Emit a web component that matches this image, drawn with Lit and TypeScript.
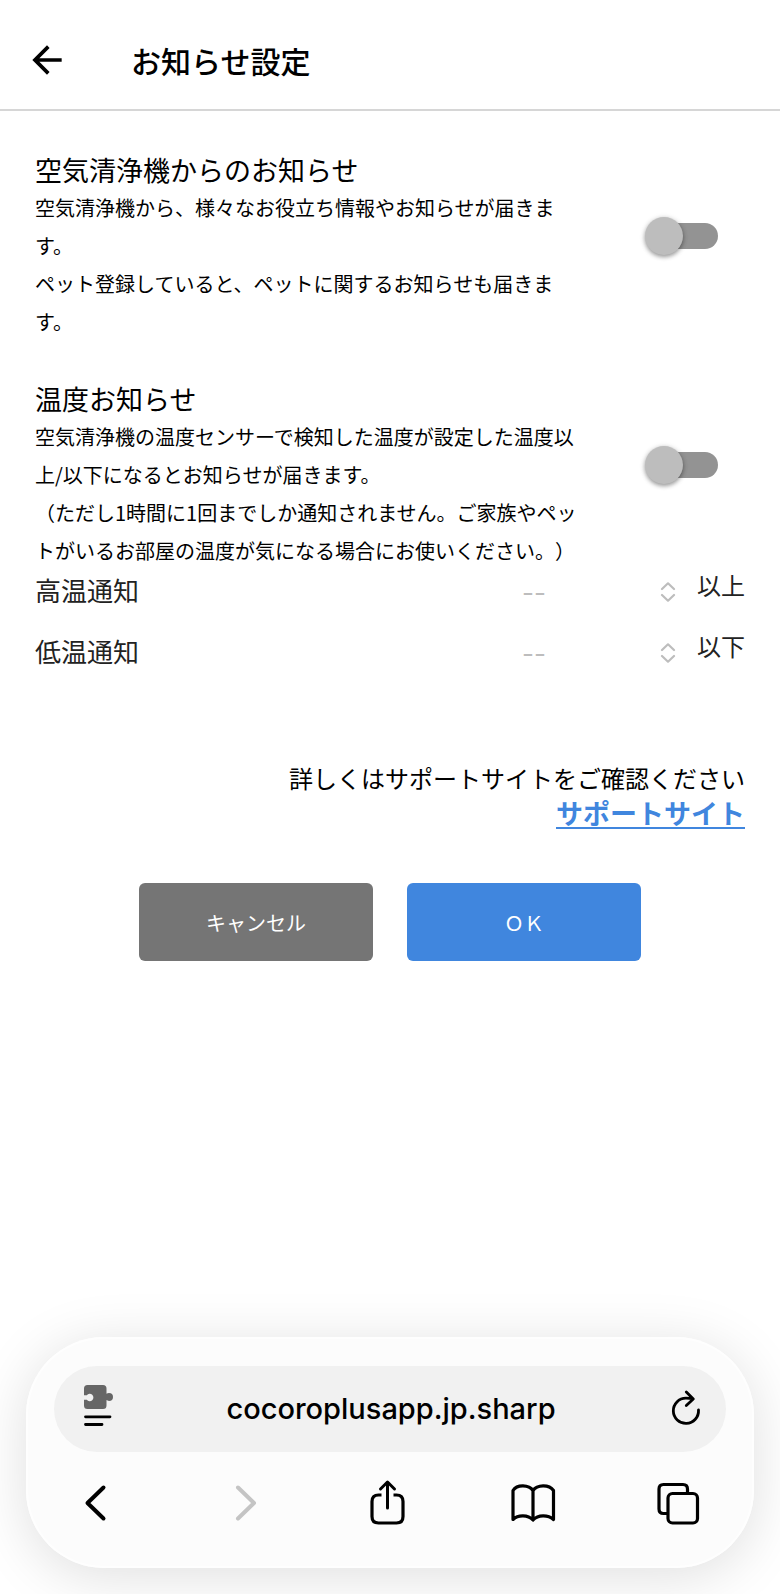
import { LitElement, html, css, svg } from "lit";
import { customElement, property } from "lit/decorators.js";

@customElement("toggle-switch")
class ToggleSwitch extends LitElement {
  @property() label = "";

  static styles = css`
    :host {
      display: block;
    }
    .switch {
      appearance: none;
      display: flex;
      align-items: center;
      width: 73px;
      height: 38px;
      margin: 0;
      cursor: pointer;
      position: relative;
    }
    .switch::before {
      content: "";
      position: absolute;
      inset: 6px 0 6px 8px;
      border-radius: 13px;
      background: #939393;
    }
    .switch::after {
      content: "";
      position: relative;
      width: 38px;
      height: 38px;
      border-radius: 50%;
      background: #bdbdbd;
      box-shadow: 0 2px 4px rgba(0, 0, 0, 0.35), 0 1px 6px rgba(0, 0, 0, 0.12);
    }
    .switch:checked::before {
      background: #9fc1ee;
    }
    .switch:checked::after {
      margin-left: auto;
      background: #4086de;
    }
  `;

  render() {
    return html`<input class="switch" type="checkbox" role="switch" aria-label=${this.label} />`;
  }
}

@customElement("temperature-row")
class TemperatureRow extends LitElement {
  @property() label = "";
  @property() unit = "";

  static styles = css`
    :host {
      display: block;
    }
    .row {
      display: flex;
      align-items: flex-start;
      color: #222;
    }
    .label {
      flex: 1;
      font-size: 26px;
      line-height: 40px;
    }
    .field {
      display: grid;
      width: 158px;
      margin-right: 17px;
      color: #bdbdbd;
    }
    .select,
    .arrows {
      grid-area: 1 / 1;
    }
    .select {
      appearance: none;
      width: 100%;
      height: 44px;
      margin: 0;
      padding: 0;
      border: 0;
      background: none;
      color: inherit;
      opacity: 1;
      font: 26px Inter, sans-serif;
    }
    .arrows {
      justify-self: end;
      align-self: center;
      width: 16px;
      height: 20px;
      margin-right: 4px;
      pointer-events: none;
    }
    .unit {
      font-size: 24px;
      line-height: 30px;
    }
  `;

  render() {
    return html`
      <div class="row">
        <label class="label" for="value">${this.label}</label>
        <div class="field">
          <select class="select" id="value" disabled>
            <option>--</option>
          </select>
          <svg class="arrows" viewBox="0 0 16 20" fill="none" stroke="currentColor" stroke-width="2.2" stroke-linecap="round" stroke-linejoin="round" aria-hidden="true">
            <path d="M2 7 8 1.3 14 7M2 13 8 18.7 14 13" />
          </svg>
        </div>
        <span class="unit">${this.unit}</span>
      </div>
    `;
  }
}

const icons = {
  back: svg`<path d="M29.500 6.500 13.500 22 29.500 37.500" stroke-width="4" />`,
  forward: svg`<path d="M18 6.500 34 22 18 37.500" stroke-width="4" />`,
  share: svg`<path d="M16.500 14h-3q-6.500 0-6.500 6.500v15q0 6.500 6.500 6.500h18q6.500 0 6.500-6.500v-15q0-6.500-6.500-6.500h-3" stroke-width="3.200" stroke-linecap="butt" /><path d="M22.500 27V1.500M15.500 8l7-7 7 7" stroke-width="3" />`,
  book: svg`<path d="M22 9.500C18 3.500 6 3 2 9.500V38.500C7 33.500 17 33.500 22 39 27 33.500 37 33.500 42.500 38.500V9.500C38 3 26 3.500 22 9.500V38.500" stroke-width="3.200" />`,
  tabs: svg`<rect x="12" y="12.500" width="29.500" height="29.500" rx="4.500" stroke-width="3.200" /><path d="M11 32.500H7.500Q3 32.500 3 28V8Q3 3.500 7.500 3.500H27Q31.500 3.500 31.500 8V11.500" stroke-width="3.200" />`,
};

@customElement("browser-bar")
class BrowserBar extends LitElement {
  static styles = css`
    :host {
      display: block;
    }
    .bar {
      box-sizing: border-box;
      padding: 29px 28px 43px;
      border-radius: 78px;
      background: #fcfcfc;
      box-shadow: 0 8px 56px rgba(0, 0, 0, 0.13), inset 0 0 0 2px #fefefe;
    }
    .address {
      display: grid;
      grid-template-columns: 44px 1fr 44px;
      align-items: center;
      height: 86px;
      padding: 0 18px 0 20px;
      border-radius: 43px;
      background: #f1f1f1;
      text-align: center;
    }
    .host {
      font: 500 29px/40px Inter, sans-serif;
      color: #000;
    }
    .tools {
      display: flex;
      justify-content: space-between;
      padding: 29px 26px 0 20px;
    }
    .button {
      display: block;
      width: 44px;
      height: 44px;
      padding: 0;
      border: 0;
      background: none;
      color: #000;
    }
    .button:disabled {
      color: #c4c4c4;
    }
    .icon {
      display: block;
      width: 44px;
      height: 44px;
      overflow: visible;
      fill: none;
      stroke: currentColor;
      stroke-linecap: round;
      stroke-linejoin: round;
    }
  `;

  private tool(label: string, icon: unknown, disabled = false) {
    return html`
      <button class="button" aria-label=${label} ?disabled=${disabled}>
        <svg class="icon" viewBox="0 0 44 44" aria-hidden="true">${icon}</svg>
      </button>
    `;
  }

  render() {
    return html`
      <div class="bar">
        <div class="address">
          ${this.tool(
            "ページメニュー",
            svg`
              <path fill="#666" stroke="none" d="M13.500 -2h15.500q3.500 0 3.500 3.500v5.200q1-.8 2.500-.8a4 4 0 0 1 0 8q-1.500 0-2.500-.8v5.400q0 3.500-3.500 3.500h-15.500q-3.500 0-3.500-3.500v-5.700h2.800a3.700 3.700 0 1 0 0-4.600h-2.800v-6.700q0-3.500 3.500-3.500z" />
              <path d="M11.500 29.800H36M11.500 37.500H28" stroke-width="2.800" />
            `,
          )}
          <span class="host">cocoroplusapp.jp.sharp</span>
          ${this.tool(
            "再読み込み",
            svg`<path d="M34.500 23A12.600 12.600 0 1 1 22 11.200Q26 11.200 29.300 12M22.300 5 29.300 12 22.300 18.500" stroke-width="2.800" />`,
          )}
        </div>
        <div class="tools">
          ${this.tool("戻る", icons.back)}
          ${this.tool("進む", icons.forward, true)}
          ${this.tool("共有", icons.share)}
          ${this.tool("ブックマーク", icons.book)}
          ${this.tool("タブ", icons.tabs)}
        </div>
      </div>
    `;
  }
}

@customElement("app-root")
class AppRoot extends LitElement {
  static styles = css`
    :host {
      display: flex;
      flex-direction: column;
      box-sizing: border-box;
      min-height: 100vh;
      overflow: hidden;
      background: #fff;
      color: #000;
      font-family: "Noto Sans CJK JP", sans-serif;
      text-spacing-trim: space-all;
    }
    .header {
      display: flex;
      align-items: center;
      gap: 62px;
      box-sizing: border-box;
      height: 111px;
      padding: 10px 25px 0;
      border-bottom: 2px solid #d6d6d6;
    }
    .back {
      width: 44px;
      height: 44px;
      padding: 0;
      border: 0;
      background: none;
      color: #000;
    }
    .back-icon {
      display: block;
      width: 44px;
      height: 44px;
      fill: currentColor;
    }
    .title {
      margin: 0;
      font-size: 30px;
      font-weight: 500;
      line-height: 44px;
    }
    .content {
      padding: 40px 35px 0;
    }
    .section {
      display: grid;
      grid-template-columns: 1fr 73px;
      column-gap: 50px;
      padding-right: 27px;
    }
    .section + .section {
      margin-top: 39px;
    }
    .heading {
      margin: 0;
      font-size: 27px;
      font-weight: 400;
      line-height: 38px;
    }
    .text {
      max-width: 555px;
      margin: 0;
      font-size: 20px;
      line-height: 38px;
    }
    .toggle {
      margin-top: 66px;
    }
    .limits {
      display: grid;
      gap: 17px;
    }
    .support {
      margin: 85px 0 0;
      font-size: 24px;
      line-height: 35px;
      text-align: right;
    }
    .link {
      color: #4086de;
      font-size: 27px;
      font-weight: 700;
      text-decoration-thickness: 2px;
      text-underline-offset: 3px;
    }
    .actions {
      display: flex;
      justify-content: center;
      gap: 34px;
      margin-top: 52px;
    }
    .action {
      width: 234px;
      height: 78px;
      padding: 0;
      border: 0;
      border-radius: 6px;
      background: #757575;
      color: #fff;
      font: 400 20px "Noto Sans CJK JP", sans-serif;
    }
    .primary {
      background: #4086de;
    }
    .browser {
      margin: auto 26px 26px;
    }
  `;

  render() {
    return html`
      <header class="header">
        <button class="back" aria-label="戻る">
          <svg class="back-icon" viewBox="0 0 24 24" aria-hidden="true">
            <path d="M20 11H7.830l5.590-5.590L12 4l-8 8 8 8 1.410-1.410L7.830 13H20v-2z" />
          </svg>
        </button>
        <h1 class="title">お知らせ設定</h1>
      </header>
      <main class="content">
        <section class="section">
          <div>
            <h2 class="heading">空気清浄機からのお知らせ</h2>
            <p class="text">空気清浄機から、様々なお役立ち情報やお知らせが届きます。<br />ペット登録していると、ペットに関するお知らせも届きます。</p>
          </div>
          <toggle-switch class="toggle" label="空気清浄機からのお知らせ"></toggle-switch>
        </section>
        <section class="section">
          <div>
            <h2 class="heading">温度お知らせ</h2>
            <p class="text">空気清浄機の温度センサーで検知した温度が設定した温度以上/以下になるとお知らせが届きます。<br />（ただし1時間に1回までしか通知されません。ご家族やペットがいるお部屋の温度が気になる場合にお使いください。）</p>
          </div>
          <toggle-switch class="toggle" label="温度お知らせ"></toggle-switch>
        </section>
        <div class="limits">
          <temperature-row label="高温通知" unit="以上"></temperature-row>
          <temperature-row label="低温通知" unit="以下"></temperature-row>
        </div>
        <p class="support">詳しくはサポートサイトをご確認ください<br /><a class="link" href="#support">サポートサイト</a></p>
        <div class="actions">
          <button class="action">キャンセル</button>
          <button class="action primary">ＯＫ</button>
        </div>
      </main>
      <browser-bar class="browser"></browser-bar>
    `;
  }
}
